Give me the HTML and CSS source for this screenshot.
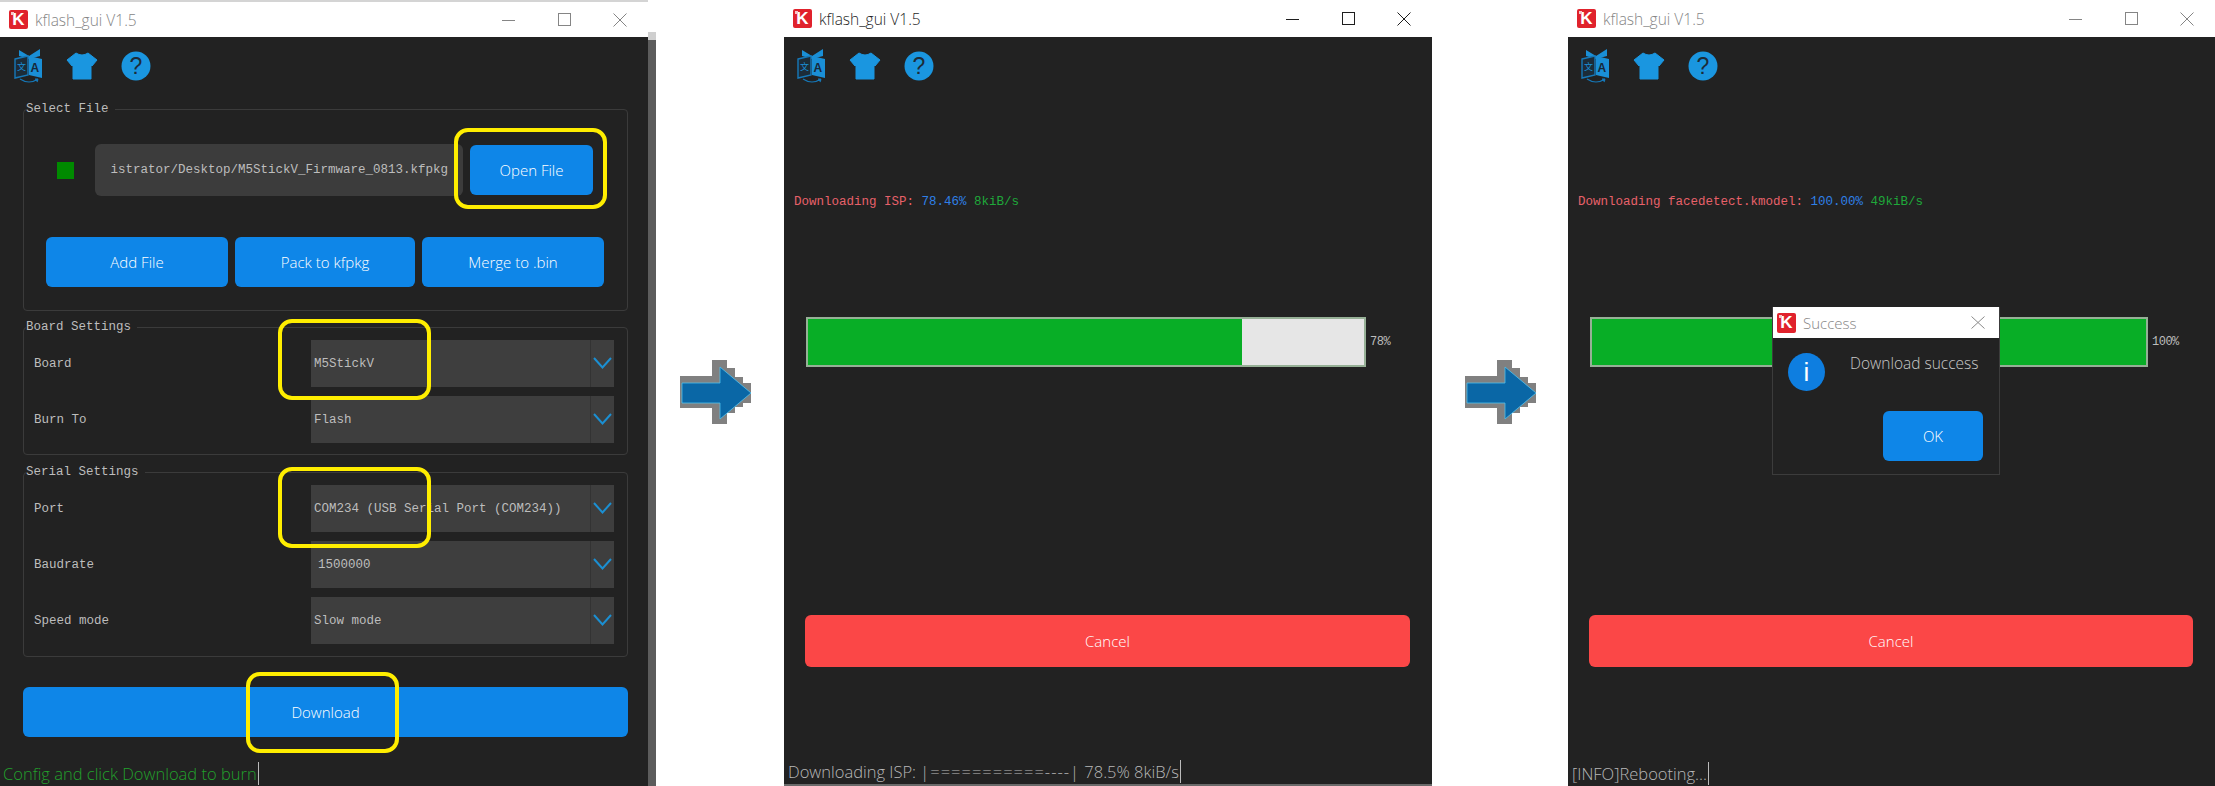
FILE: index.html
```html
<!DOCTYPE html>
<html lang="en">
<head>
    <meta charset="UTF-8">
    <meta name="viewport" content="width=device-width, initial-scale=1.0">
    <title>kflash_gui</title>
    <link rel="stylesheet" href="styles.css">
</head>
<body>
    <!-- Shapes used more than once -->
    <svg class="defs" width="0" height="0">
        <symbol id="ic-shirt" viewBox="0 0 32 28">
            <path d="M10 1 Q16 5 22 1 L31 8 L26 14 L25 13 V27 H7 V13 L6 14 L1 8 Z" fill="#1a96e0" stroke="#1a96e0" stroke-linejoin="round"/>
        </symbol>
        <symbol id="ic-arrow" viewBox="0 0 72 70">
            <g fill="#808080" shape-rendering="crispEdges">
                <rect x="0" y="18" width="42" height="32"/>
                <rect x="32" y="2" width="15" height="64"/>
                <rect x="47" y="10" width="8" height="45"/>
                <rect x="55" y="19" width="8" height="30"/>
                <rect x="63" y="25" width="8" height="20"/>
            </g>
            <path d="M2 25 H40 V9 L71 35 L40 61 V45 H2 Z" fill="#0a67a6" stroke="#4fc0ee" stroke-width="0.8"/>
        </symbol>
        <symbol id="ic-chevron" viewBox="0 0 19 12">
            <path d="M1 1 L9.5 10.5 L18 1" fill="none" stroke="#1b8fd2" stroke-width="2"/>
        </symbol>
    </svg>

    <!-- Main window -->
    <section class="window window-main">
        <header class="titlebar inactive">
            <span class="logo">K</span>
            <span class="title">kflash_gui V1.5</span>
            <span class="caption">
                <span class="cap-btn"><svg width="13" height="12"><path d="M0 6.5 H13" stroke="currentColor"/></svg></span>
                <span class="cap-btn"><svg width="13" height="13"><rect x="0.5" y="0.5" width="12" height="12" fill="none" stroke="currentColor"/></svg></span>
                <span class="cap-btn"><svg width="14" height="14"><path d="M0.5 0.5 L13.5 13.5 M13.5 0.5 L0.5 13.5" stroke="currentColor"/></svg></span>
            </span>
        </header>
        <div class="client">
            <div class="toolbar toolbar-main">
                <svg class="tool-lang" viewBox="0 0 30 35">
                    <path d="M5 2 L15 8 L26 1 V8 L15 11 L5 8 Z" fill="#1a8fd6"/>
                    <path d="M1 11 L14 8 V27 L1 30 Z" fill="#1c2c38" stroke="#1678b8" stroke-width="1.4"/>
                    <path d="M15 8 L28 11 V30 L15 27 Z" fill="#1a8fd6"/>
                    <text x="3" y="22" class="ic-zh">文</text>
                    <text x="16.5" y="24" class="ic-a">A</text>
                    <path d="M6 31 Q15 37 24 31 M24 31 L23 34 M24 31 L21 31" fill="none" stroke="#1678b8" stroke-width="1.2"/>
                </svg>
                <svg class="tool-shirt"><use href="#ic-shirt"/></svg>
                <svg class="tool-help" viewBox="0 0 30 30">
                    <circle cx="15" cy="15" r="14.5" fill="#1a96e0"/>
                    <text x="15" y="23" text-anchor="middle" class="ic-q">?</text>
                </svg>
            </div>

            <fieldset class="group group-file">
                <legend>Select File</legend>
                <div class="file-row">
                    <span class="status-dot"></span>
                    <div class="path-box">istrator/Desktop/M5StickV_Firmware_0813.kfpkg</div>
                    <button class="btn btn-open">Open File</button>
                </div>
                <div class="file-actions">
                    <button class="btn">Add File</button>
                    <button class="btn">Pack to kfpkg</button>
                    <button class="btn">Merge to .bin</button>
                </div>
            </fieldset>

            <fieldset class="group group-board">
                <legend>Board Settings</legend>
                <div class="field"><label>Board</label><div class="combo"><span>M5StickV</span><i><svg><use href="#ic-chevron"/></svg></i></div></div>
                <div class="field"><label>Burn To</label><div class="combo"><span>Flash</span><i><svg><use href="#ic-chevron"/></svg></i></div></div>
            </fieldset>

            <fieldset class="group group-serial">
                <legend>Serial Settings</legend>
                <div class="field"><label>Port</label><div class="combo"><span>COM234 (USB Serial Port (COM234))</span><i><svg><use href="#ic-chevron"/></svg></i></div></div>
                <div class="field"><label>Baudrate</label><div class="combo"><span class="num">1500000</span><i><svg><use href="#ic-chevron"/></svg></i></div></div>
                <div class="field"><label>Speed mode</label><div class="combo"><span>Slow mode</span><i><svg><use href="#ic-chevron"/></svg></i></div></div>
            </fieldset>

            <button class="btn btn-download">Download</button>
            <div class="status status-green"><span>Config and click Download to burn</span></div>
        </div>

        <!-- Yellow call-outs -->
        <div class="mark mark-open"></div>
        <div class="mark mark-board"></div>
        <div class="mark mark-port"></div>
        <div class="mark mark-download"></div>
    </section>
    <div class="edge-strip"></div>

    <div class="arrow-col arrow-first"><svg class="arrow"><use href="#ic-arrow"/></svg></div>

    <!-- Downloading -->
    <section class="window window-progress">
        <header class="titlebar">
            <span class="logo">K</span>
            <span class="title">kflash_gui V1.5</span>
            <span class="caption">
                <span class="cap-btn"><svg width="13" height="12"><path d="M0 6.5 H13" stroke="currentColor"/></svg></span>
                <span class="cap-btn"><svg width="13" height="13"><rect x="0.5" y="0.5" width="12" height="12" fill="none" stroke="currentColor"/></svg></span>
                <span class="cap-btn"><svg width="14" height="14"><path d="M0.5 0.5 L13.5 13.5 M13.5 0.5 L0.5 13.5" stroke="currentColor"/></svg></span>
            </span>
        </header>
        <div class="client client-line">
            <div class="toolbar">
                <svg class="tool-lang" viewBox="0 0 30 35">
                    <path d="M5 2 L15 8 L26 1 V8 L15 11 L5 8 Z" fill="#1a8fd6"/>
                    <path d="M1 11 L14 8 V27 L1 30 Z" fill="#1c2c38" stroke="#1678b8" stroke-width="1.4"/>
                    <path d="M15 8 L28 11 V30 L15 27 Z" fill="#1a8fd6"/>
                    <text x="3" y="22" class="ic-zh">文</text>
                    <text x="16.5" y="24" class="ic-a">A</text>
                    <path d="M6 31 Q15 37 24 31 M24 31 L23 34 M24 31 L21 31" fill="none" stroke="#1678b8" stroke-width="1.2"/>
                </svg>
                <svg class="tool-shirt"><use href="#ic-shirt"/></svg>
                <svg class="tool-help" viewBox="0 0 30 30">
                    <circle cx="15" cy="15" r="14.5" fill="#1a96e0"/>
                    <text x="15" y="23" text-anchor="middle" class="ic-q">?</text>
                </svg>
            </div>
            <div class="progress-text"><span class="red">Downloading ISP:</span> <span class="blue">78.46%</span> <span class="green">8kiB/s</span></div>
            <div class="bar-row">
                <div class="bar"><div class="bar-fill" style="width: 78%"></div></div>
                <span class="bar-pct">78%</span>
            </div>
            <button class="btn btn-cancel">Cancel</button>
            <div class="status"><span>Downloading ISP: <b>|===========----|</b> 78.5% 8kiB/s</span></div>
        </div>
    </section>

    <div class="arrow-col arrow-second"><svg class="arrow"><use href="#ic-arrow"/></svg></div>

    <!-- Finished -->
    <section class="window window-done">
        <header class="titlebar inactive">
            <span class="logo">K</span>
            <span class="title">kflash_gui V1.5</span>
            <span class="caption">
                <span class="cap-btn"><svg width="13" height="12"><path d="M0 6.5 H13" stroke="currentColor"/></svg></span>
                <span class="cap-btn"><svg width="13" height="13"><rect x="0.5" y="0.5" width="12" height="12" fill="none" stroke="currentColor"/></svg></span>
                <span class="cap-btn"><svg width="14" height="14"><path d="M0.5 0.5 L13.5 13.5 M13.5 0.5 L0.5 13.5" stroke="currentColor"/></svg></span>
            </span>
        </header>
        <div class="client">
            <div class="toolbar">
                <svg class="tool-lang" viewBox="0 0 30 35">
                    <path d="M5 2 L15 8 L26 1 V8 L15 11 L5 8 Z" fill="#1a8fd6"/>
                    <path d="M1 11 L14 8 V27 L1 30 Z" fill="#1c2c38" stroke="#1678b8" stroke-width="1.4"/>
                    <path d="M15 8 L28 11 V30 L15 27 Z" fill="#1a8fd6"/>
                    <text x="3" y="22" class="ic-zh">文</text>
                    <text x="16.5" y="24" class="ic-a">A</text>
                    <path d="M6 31 Q15 37 24 31 M24 31 L23 34 M24 31 L21 31" fill="none" stroke="#1678b8" stroke-width="1.2"/>
                </svg>
                <svg class="tool-shirt"><use href="#ic-shirt"/></svg>
                <svg class="tool-help" viewBox="0 0 30 30">
                    <circle cx="15" cy="15" r="14.5" fill="#1a96e0"/>
                    <text x="15" y="23" text-anchor="middle" class="ic-q">?</text>
                </svg>
            </div>
            <div class="progress-text"><span class="red">Downloading facedetect.kmodel:</span> <span class="blue">100.00%</span> <span class="green">49kiB/s</span></div>
            <div class="bar-row">
                <div class="bar"><div class="bar-fill" style="width: 100%"></div></div>
                <span class="bar-pct">100%</span>
            </div>
            <button class="btn btn-cancel">Cancel</button>
            <div class="status"><span>[INFO]Rebooting...</span></div>
        </div>

        <div class="dialog">
            <div class="dialog-head">
                <span class="logo logo-small">K</span>
                <span class="dialog-title">Success</span>
                <svg class="dialog-close" width="14" height="13"><path d="M0.5 0.5 L13.5 12.5 M13.5 0.5 L0.5 12.5" stroke="#8a8a8a"/></svg>
            </div>
            <div class="dialog-body">
                <span class="info-icon">i</span>
                <p>Download success</p>
            </div>
            <div class="dialog-foot"><button class="btn btn-ok">OK</button></div>
        </div>
    </section>
</body>
</html>
```

FILE: styles.css
```css
* { margin: 0; padding: 0; box-sizing: border-box; }
html, body { height: 100%; }
body { display: flex; width: 2215px; height: 786px; overflow: hidden; background: #fff; font-family: 'Open Sans', 'Noto Sans', sans-serif; }
.defs { position: absolute; }
.ic-zh { font: 9px 'Noto Sans CJK SC', sans-serif; fill: #1a8fd6; }
.ic-a { font: bold 12px 'Liberation Sans', sans-serif; fill: #16283a; }
.ic-q { font: 23px 'Liberation Sans', sans-serif; fill: #1c2b38; }

.window { position: relative; display: flex; flex-direction: column; height: 786px; }
.window-main { width: 648px; }
.window-progress { width: 648px; }
.window-done { width: 647px; }
.edge-strip { width: 8px; margin-top: 32px; background: linear-gradient(#cfcfcf 8px, #5c5c5c 8px); }

.arrow-col { display: flex; align-items: center; }
.arrow-first { width: 128px; padding-left: 24px; }
.arrow-second { width: 136px; padding-left: 33px; }
.arrow { width: 72px; height: 70px; }

/* title bar */
.titlebar { display: flex; align-items: center; flex: 0 0 37px; padding-left: 9px; background: #fff; color: #1e1e1e; }
.titlebar.inactive { color: #858585; }
.window-main .titlebar { border-top: 2px solid #d4d4d4; }
.logo { position: relative; display: flex; align-items: center; justify-content: center; width: 19px; height: 19px; border-radius: 2px; background: #e0222c; color: #fff; font: bold 17px 'Liberation Sans', sans-serif; }
.logo::before { content: ""; position: absolute; left: 2px; top: 2px; width: 3px; height: 3px; background: #f6c5c8; }
.title { margin-left: 7px; font-size: 15.5px; font-weight: 300; }
.caption { display: flex; margin-left: auto; }
.cap-btn { display: flex; align-items: center; justify-content: center; width: 56px; }

/* client area */
.client { display: flex; flex-direction: column; flex: 1; min-height: 0; background: #222; }
.client-line { border-bottom: 2px solid #6a6a6a; }
.toolbar { display: flex; align-items: center; height: 35px; margin-top: 11px; padding-left: 13px; flex: none; }
.toolbar-main { padding-left: 14px; }
.tool-lang { width: 30px; height: 35px; }
.tool-shirt { width: 32px; height: 28px; margin-left: 22px; }
.tool-help { width: 30px; height: 30px; margin-left: 23px; }

/* groups */
.group { margin: 0 20px 0 23px; border: 1px solid #3b3b3b; border-radius: 4px; color: #bdbdbd; font: 12.5px/16px 'Liberation Mono', monospace; }
.group legend { margin-left: 2px; padding-right: 6px; color: #bdbdbd; }
.group-file { margin-top: 18px; height: 210px; }
.group-board { margin-top: 8px; height: 136px; padding-top: 5px; }
.group-serial { margin-top: 9px; height: 193px; padding-top: 5px; }

.file-row { display: flex; align-items: center; gap: 7px; margin-top: 27px; padding-left: 33px; }
.status-dot { width: 17px; height: 17px; margin-right: 14px; background: #008a00; }
.path-box { display: flex; align-items: center; justify-content: flex-end; width: 368px; height: 52px; padding-right: 15px; border-radius: 6px; background: #3c3c3c; color: #bdbdbd; white-space: nowrap; }
.file-actions { display: flex; gap: 7px; margin-top: 41px; padding-left: 22px; }
.file-actions .btn { width: 182px; }
.file-actions .btn:nth-child(2) { width: 180px; }

.btn { height: 50px; border: 0; border-radius: 6px; background: #0e86e8; color: #fff; font: 300 15px 'Open Sans', 'Noto Sans', sans-serif; }
.btn-open { width: 123px; }
.btn-download { width: 605px; margin: 30px 0 0 23px; flex: none; }
.btn-cancel { height: 52px; margin: 248px 22px 0 21px; background: #fb4747; flex: none; }

.field { display: grid; grid-template-columns: 277px 303px; align-items: center; padding-left: 10px; margin-bottom: 9px; }
.combo { display: flex; align-items: center; justify-content: space-between; height: 47px; padding-left: 3px; background: #3e3e3e; color: #bdbdbd; }
.combo .num { padding-left: 4px; }
.combo i { display: flex; justify-content: center; width: 24px; height: 100%; padding-top: 17px; border-left: 1px solid #333; }
.combo svg { width: 19px; height: 12px; }

/* status line */
.status { display: flex; align-items: center; margin-top: auto; height: 25px; padding-left: 4px; color: #b8b8b8; font-size: 16.5px; font-weight: 300; white-space: nowrap; }
.status > span { padding-right: 1px; border-right: 1px solid #bbb; }
.status b { font-weight: 300; letter-spacing: 1px; }
.status-green { padding-left: 3px; color: #22a02c; }

/* progress */
.progress-text { margin: 111px 0 0 10px; font: 12.5px/16px 'Liberation Mono', monospace; white-space: nowrap; }
.red { color: #e8616a; }
.blue { color: #2f80e8; }
.green { color: #1fa83a; }
.bar-row { display: flex; align-items: center; gap: 4px; margin: 107px 0 0 22px; }
.bar { width: 558px; height: 50px; border: 2px solid #96b096; background: #e6e6e6; }
.window-progress .bar { width: 560px; }
.bar-fill { height: 100%; background: #08ae26; }
.bar-pct { color: #bdbdbd; font: 12px 'Liberation Mono', monospace; letter-spacing: -0.5px; }

/* call-outs */
.mark { position: absolute; width: 153px; height: 81px; border: 4px solid #ffee00; border-radius: 14px; }
.mark-open { left: 454px; top: 128px; }
.mark-board { left: 278px; top: 319px; }
.mark-port { left: 278px; top: 467px; }
.mark-download { left: 246px; top: 672px; }

/* message box */
.dialog { position: absolute; left: 204px; top: 307px; width: 228px; height: 168px; border: 1px solid #3c3c3c; border-top: 0; background: #222; }
.dialog-head { display: flex; align-items: center; height: 31px; padding: 0 14px 0 4px; background: #fff; }
.logo-small { width: 19px; height: 20px; }
.dialog-title { margin-left: 7px; color: #858585; font-size: 15px; font-weight: 300; }
.dialog-close { margin-left: auto; }
.dialog-body { display: flex; padding: 15px 0 0 15px; }
.info-icon { display: flex; align-items: center; justify-content: center; width: 37px; height: 38px; border-radius: 50%; background: #0e7ee0; color: #fff; font: 26px 'Liberation Sans', sans-serif; }
.dialog-body p { margin-left: 25px; color: #c8c8c8; font-size: 15.5px; font-weight: 300; line-height: 20px; }
.dialog-foot { display: flex; justify-content: flex-end; padding: 20px 16px 0 0; }
.btn-ok { width: 100px; }
```
